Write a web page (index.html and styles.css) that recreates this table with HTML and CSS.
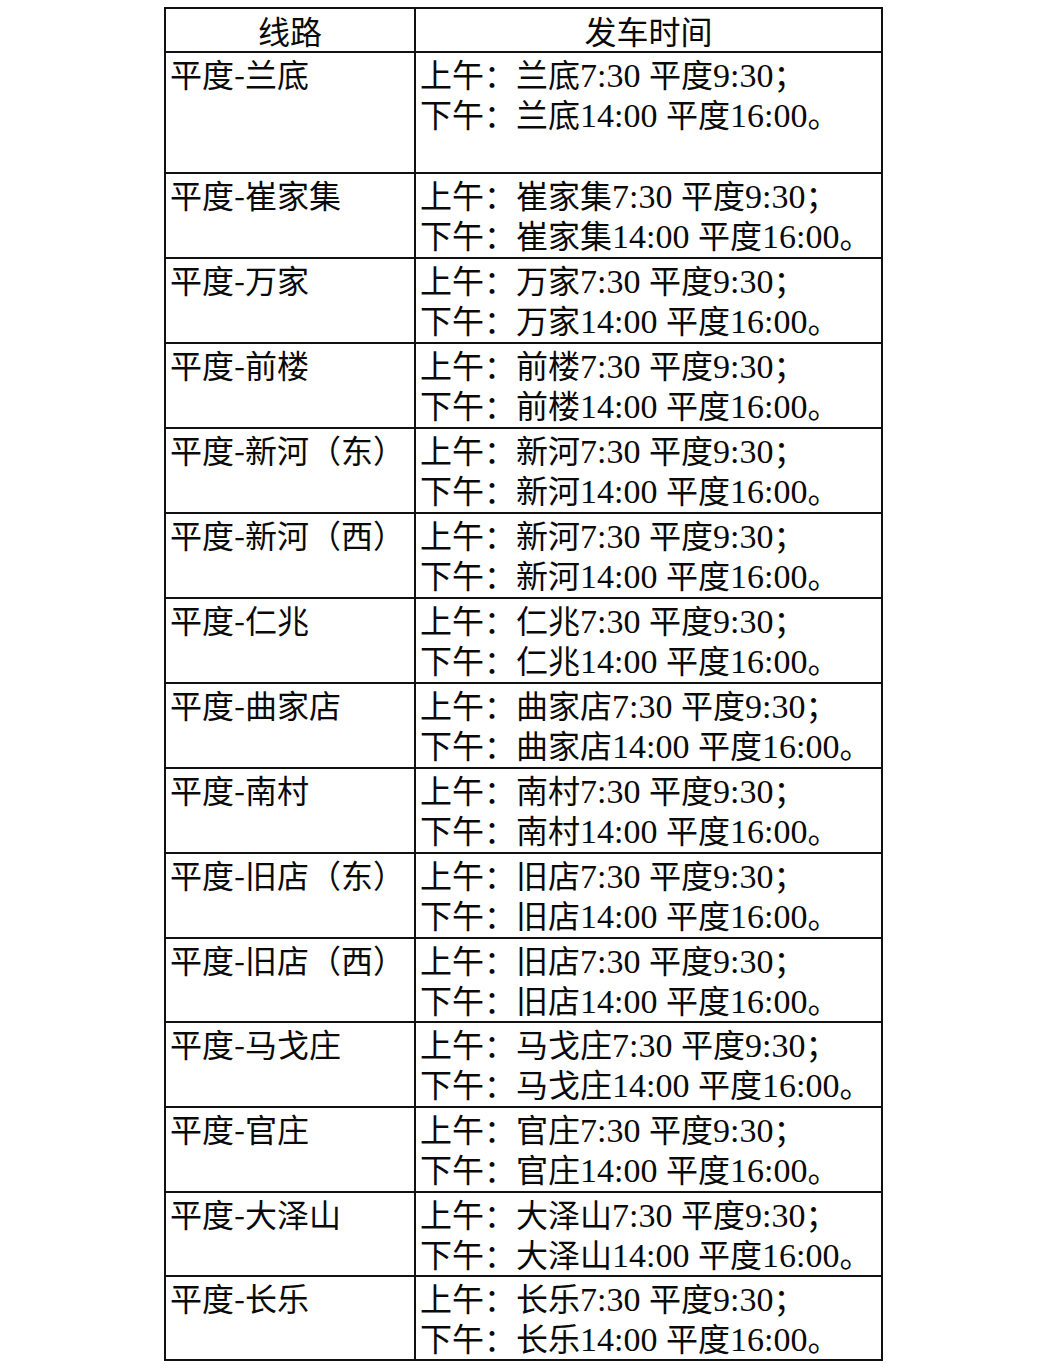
FILE: index.html
```html
<!DOCTYPE html>
<html lang="zh-CN">
<head>
<meta charset="utf-8">
<title>发车时间</title>
<link rel="stylesheet" href="styles.css">
</head>
<body>
<table class="schedule">
  <thead>
    <tr class="head"><th class="c1">线路</th><th class="c2">发车时间</th></tr>
  </thead>
  <tbody>
    <tr class="first"><td class="c1">平度-兰底</td><td class="c2">上午：兰底<span class="n">7:30 </span>平度<span class="n">9:30</span>；<br>下午：兰底<span class="n">14:00 </span>平度<span class="n">16:00</span>。</td></tr>
    <tr><td class="c1">平度-崔家集</td><td class="c2">上午：崔家集<span class="n">7:30 </span>平度<span class="n">9:30</span>；<br>下午：崔家集<span class="n">14:00 </span>平度<span class="n">16:00</span>。</td></tr>
    <tr><td class="c1">平度-万家</td><td class="c2">上午：万家<span class="n">7:30 </span>平度<span class="n">9:30</span>；<br>下午：万家<span class="n">14:00 </span>平度<span class="n">16:00</span>。</td></tr>
    <tr><td class="c1">平度-前楼</td><td class="c2">上午：前楼<span class="n">7:30 </span>平度<span class="n">9:30</span>；<br>下午：前楼<span class="n">14:00 </span>平度<span class="n">16:00</span>。</td></tr>
    <tr><td class="c1">平度-新河（东）</td><td class="c2">上午：新河<span class="n">7:30 </span>平度<span class="n">9:30</span>；<br>下午：新河<span class="n">14:00 </span>平度<span class="n">16:00</span>。</td></tr>
    <tr><td class="c1">平度-新河（西）</td><td class="c2">上午：新河<span class="n">7:30 </span>平度<span class="n">9:30</span>；<br>下午：新河<span class="n">14:00 </span>平度<span class="n">16:00</span>。</td></tr>
    <tr><td class="c1">平度-仁兆</td><td class="c2">上午：仁兆<span class="n">7:30 </span>平度<span class="n">9:30</span>；<br>下午：仁兆<span class="n">14:00 </span>平度<span class="n">16:00</span>。</td></tr>
    <tr><td class="c1">平度-曲家店</td><td class="c2">上午：曲家店<span class="n">7:30 </span>平度<span class="n">9:30</span>；<br>下午：曲家店<span class="n">14:00 </span>平度<span class="n">16:00</span>。</td></tr>
    <tr><td class="c1">平度-南村</td><td class="c2">上午：南村<span class="n">7:30 </span>平度<span class="n">9:30</span>；<br>下午：南村<span class="n">14:00 </span>平度<span class="n">16:00</span>。</td></tr>
    <tr><td class="c1">平度-旧店（东）</td><td class="c2">上午：旧店<span class="n">7:30 </span>平度<span class="n">9:30</span>；<br>下午：旧店<span class="n">14:00 </span>平度<span class="n">16:00</span>。</td></tr>
    <tr class="short"><td class="c1">平度-旧店（西）</td><td class="c2">上午：旧店<span class="n">7:30 </span>平度<span class="n">9:30</span>；<br>下午：旧店<span class="n">14:00 </span>平度<span class="n">16:00</span>。</td></tr>
    <tr><td class="c1">平度-马戈庄</td><td class="c2">上午：马戈庄<span class="n">7:30 </span>平度<span class="n">9:30</span>；<br>下午：马戈庄<span class="n">14:00 </span>平度<span class="n">16:00</span>。</td></tr>
    <tr><td class="c1">平度-官庄</td><td class="c2">上午：官庄<span class="n">7:30 </span>平度<span class="n">9:30</span>；<br>下午：官庄<span class="n">14:00 </span>平度<span class="n">16:00</span>。</td></tr>
    <tr class="short"><td class="c1">平度-大泽山</td><td class="c2">上午：大泽山<span class="n">7:30 </span>平度<span class="n">9:30</span>；<br>下午：大泽山<span class="n">14:00 </span>平度<span class="n">16:00</span>。</td></tr>
    <tr class="short"><td class="c1">平度-长乐</td><td class="c2">上午：长乐<span class="n">7:30 </span>平度<span class="n">9:30</span>；<br>下午：长乐<span class="n">14:00 </span>平度<span class="n">16:00</span>。</td></tr>
  </tbody>
</table>
</body>
</html>
```

FILE: styles.css
```css
html, body {
  margin: 0;
  padding: 0;
  background: #fff;
}

body {
  padding: 7px 0 0 164px;
  color: #0a0a0a;
  font-family: "Noto Sans CJK SC", "Noto Sans", sans-serif;
  font-size: 32px;
  line-height: 40px;
}

.schedule {
  border-collapse: separate;
  border-spacing: 0;
  border-left: 2px solid #111;
  border-top: 2px solid #111;
  table-layout: fixed;
}

.schedule th,
.schedule td {
  border-right: 2px solid #111;
  border-bottom: 2px solid #111;
  padding: 0 0 0 4px;
  vertical-align: top;
  text-align: left;
  white-space: nowrap;
  box-sizing: border-box;
  font-weight: normal;
}

.schedule .c1 { width: 250px; }
.schedule .c2 { width: 467px; }

.schedule .head th {
  height: 44px;
  line-height: 40px;
  text-align: center;
  vertical-align: middle;
  padding: 0;
}

.schedule tr td { height: 85px; }
.schedule tr.first td { height: 121px; }
.schedule tr.short td { height: 84px; }

.n {
  font-family: "Liberation Serif", "Times New Roman", serif;
  font-size: 34px;
  line-height: 1;
}
```
